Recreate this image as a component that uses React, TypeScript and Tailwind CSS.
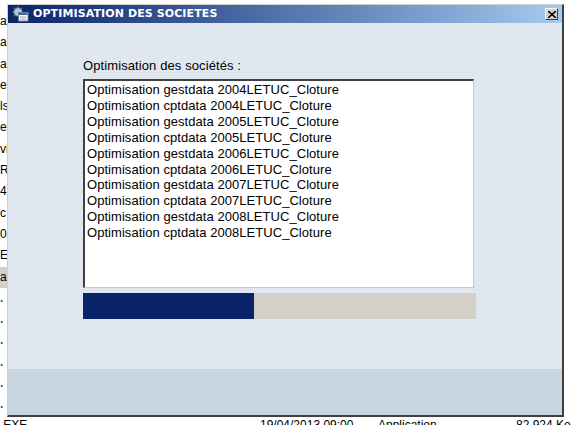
import React from "react";

const items = [
  "Optimisation gestdata 2004LETUC_Cloture",
  "Optimisation cptdata 2004LETUC_Cloture",
  "Optimisation gestdata 2005LETUC_Cloture",
  "Optimisation cptdata 2005LETUC_Cloture",
  "Optimisation gestdata 2006LETUC_Cloture",
  "Optimisation cptdata 2006LETUC_Cloture",
  "Optimisation gestdata 2007LETUC_Cloture",
  "Optimisation cptdata 2007LETUC_Cloture",
  "Optimisation gestdata 2008LETUC_Cloture",
  "Optimisation cptdata 2008LETUC_Cloture",
];

const leftFrags = ["ab", "ab", "ab", "et", "ls", "et", "vi", "RT", "4:", "c", "0", "E", "a.", ".", ".", ".", ".", ".", "."];

function TitleIcon() {
  return (
    <svg width="17" height="16" viewBox="0 0 17 16">
      <g fill="#b8c4d4" stroke="#5c6a80" strokeWidth="0.8">
        <circle cx="6" cy="6" r="4.2" />
      </g>
      <g stroke="#5c6a80" strokeWidth="2">
        <line x1="6" y1="0.5" x2="6" y2="2" />
        <line x1="0.5" y1="6" x2="2" y2="6" />
        <line x1="2" y1="2" x2="3" y2="3" />
        <line x1="10" y1="2" x2="9" y2="3" />
        <line x1="2" y1="10" x2="3" y2="9" />
      </g>
      <rect x="6.5" y="6.5" width="9.5" height="8.5" fill="#ffffff" stroke="#6d7f99" />
      <rect x="7" y="7" width="8.5" height="2" fill="#3a6ea5" />
      <line x1="8" y1="11" x2="14" y2="11" stroke="#9aa8bb" />
      <line x1="8" y1="13" x2="14" y2="13" stroke="#9aa8bb" />
    </svg>
  );
}

export default function App() {
  return (
    <div
      className="relative w-[572px] h-[425px] overflow-hidden bg-white text-black"
      style={{ fontFamily: '"Liberation Sans", Arial, sans-serif' }}
    >
      {/* background window fragments */}
      <div className="absolute left-0 top-[-11px] flex w-[572px] text-[12px] leading-[14px] whitespace-nowrap">
        <span className="w-[255px] overflow-hidden">AdministrationSociétésAnnuelles.exe</span>
        <span className="w-[115px]">03/11/2013 08:47</span>
        <span className="w-[140px]">Fichier RPT</span>
        <span>426 Ko</span>
      </div>
      <div className="absolute left-0 top-[11px] flex flex-col text-[12px] leading-[21.3px] whitespace-nowrap">
        {leftFrags.map((f, i) => (
          <span key={i} className={i === 12 ? "bg-[#d4d0c8] pr-2" : i > 12 ? "text-[#1a4fa0] font-bold" : ""}>
            {f}
          </span>
        ))}
      </div>
      <div className="absolute left-0 top-[418px] flex w-[572px] text-[12px] leading-[14px] whitespace-nowrap">
        <span className="w-[260px]">.EXE</span>
        <span className="w-[118px]">19/04/2013 09:00</span>
        <span className="w-[138px]">Application</span>
        <span>82 924 Ko</span>
      </div>

      {/* dialog */}
      <div className="absolute left-[7px] top-[4px] w-[557px] h-[413px] flex flex-col bg-[#e0e7ef] border-r-2 border-b-2 border-[#404040] border-l border-l-[#d4d0c8] border-t border-t-[#d4d0c8]">
        <div className="h-[18px] flex items-center bg-gradient-to-r from-[#0a246a] to-[#a6caf0] pl-[4px] pr-[4px]">
          <TitleIcon />
          <span
            className="ml-[4px] text-white text-[11px] font-bold tracking-[0.1px]"
            style={{ fontFamily: '"DejaVu Sans", "Liberation Sans", sans-serif' }}
          >
            OPTIMISATION DES SOCIETES
          </span>
          <div className="ml-auto w-[13px] h-[12px] bg-[#d4d0c8] border border-t-white border-l-white border-r-[#404040] border-b-[#404040] flex items-center justify-center">
            <svg width="8" height="7" viewBox="0 0 8 7">
              <path d="M0 0 L8 7 M8 0 L0 7" stroke="#000" strokeWidth="1.6" />
            </svg>
          </div>
        </div>
        <div className="flex-1 flex flex-col pl-[75px] pt-[35px]">
          <div className="text-[13px] leading-[15px] tracking-[0.1px]">Optimisation des sociétés :</div>
          <div className="mt-[6px] w-[391px] h-[209px] bg-white border-t-2 border-l-2 border-t-[#404040] border-l-[#404040] border-r border-b border-r-[#c8c8c8] border-b-[#c8c8c8] pl-[2px] pt-[1px]">
            {items.map((t) => (
              <div key={t} className="text-[13px] leading-[15.9px] tracking-[0.05px] whitespace-nowrap">
                {t}
              </div>
            ))}
          </div>
          <div className="mt-[5px] w-[393px] h-[26px] flex bg-[#d4d0c8]">
            <div className="w-[171px] bg-[#0a246a]" />
          </div>
        </div>
        <div className="h-[46px] bg-[#c8d6e1]" />
      </div>
    </div>
  );
}
